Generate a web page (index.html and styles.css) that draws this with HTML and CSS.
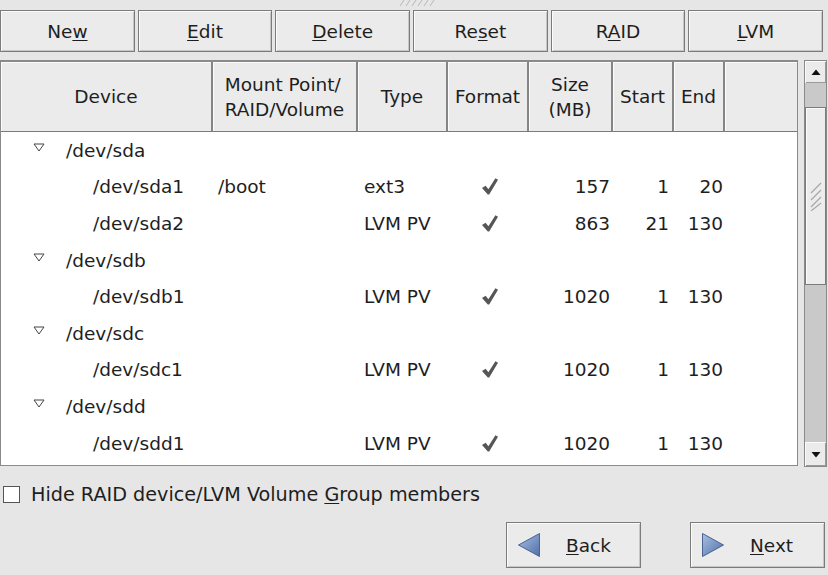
FILE: index.html
```html
<!DOCTYPE html>
<html lang="en">
<head>
    <meta charset="UTF-8">
    <title>Disk Setup</title>
    <link rel="stylesheet" href="styles.css">
</head>
<body>
    <div class="grip">
        <svg width="40" height="7" viewBox="0 0 40 7">
            <g stroke="#b8b8b8" stroke-width="1">
                <line x1="2" y1="6" x2="6" y2="0"/><line x1="8" y1="6" x2="12" y2="0"/>
                <line x1="14" y1="6" x2="18" y2="0"/><line x1="20" y1="6" x2="24" y2="0"/>
                <line x1="26" y1="6" x2="30" y2="0"/><line x1="32" y1="6" x2="36" y2="0"/>
            </g>
        </svg>
    </div>

    <div class="toolbar">
        <button class="btn">Ne<u>w</u></button>
        <button class="btn"><u>E</u>dit</button>
        <button class="btn"><u>D</u>elete</button>
        <button class="btn">Re<u>s</u>et</button>
        <button class="btn">R<u>A</u>ID</button>
        <button class="btn"><u>L</u>VM</button>
    </div>

    <div class="main">
        <div class="tree">
            <div class="row head">
                <div class="hcell">Device</div>
                <div class="hcell"><span class="left">Mount Point/<br>RAID/Volume</span></div>
                <div class="hcell">Type</div>
                <div class="hcell">Format</div>
                <div class="hcell"><span>Size<br>(MB)</span></div>
                <div class="hcell">Start</div>
                <div class="hcell">End</div>
                <div class="hcell"></div>
            </div>
            <div class="body">
                <div class="row parent">
                    <div class="dev"><svg class="exp" width="12" height="9" viewBox="0 0 12 9"><polygon points="1,1 11,1 6,8" fill="#fff" stroke="#444" stroke-width="1"/></svg>/dev/sda</div>
                </div>
                <div class="row child">
                    <div class="dev">/dev/sda1</div><div class="mnt">/boot</div><div class="type">ext3</div>
                    <div class="fmt"><svg class="check" width="16" height="17" viewBox="0 0 16 17"><polygon points="0,10 3.6,7.8 6.4,11.2 13.4,0.3 16,1.8 7.2,16.6 5.8,16.6" fill="#565656"/></svg></div>
                    <div class="num size">157</div><div class="num start">1</div><div class="num end">20</div>
                </div>
                <div class="row child">
                    <div class="dev">/dev/sda2</div><div class="mnt"></div><div class="type">LVM PV</div>
                    <div class="fmt"><svg class="check" width="16" height="17" viewBox="0 0 16 17"><polygon points="0,10 3.6,7.8 6.4,11.2 13.4,0.3 16,1.8 7.2,16.6 5.8,16.6" fill="#565656"/></svg></div>
                    <div class="num size">863</div><div class="num start">21</div><div class="num end">130</div>
                </div>
                <div class="row parent">
                    <div class="dev"><svg class="exp" width="12" height="9" viewBox="0 0 12 9"><polygon points="1,1 11,1 6,8" fill="#fff" stroke="#444" stroke-width="1"/></svg>/dev/sdb</div>
                </div>
                <div class="row child">
                    <div class="dev">/dev/sdb1</div><div class="mnt"></div><div class="type">LVM PV</div>
                    <div class="fmt"><svg class="check" width="16" height="17" viewBox="0 0 16 17"><polygon points="0,10 3.6,7.8 6.4,11.2 13.4,0.3 16,1.8 7.2,16.6 5.8,16.6" fill="#565656"/></svg></div>
                    <div class="num size">1020</div><div class="num start">1</div><div class="num end">130</div>
                </div>
                <div class="row parent">
                    <div class="dev"><svg class="exp" width="12" height="9" viewBox="0 0 12 9"><polygon points="1,1 11,1 6,8" fill="#fff" stroke="#444" stroke-width="1"/></svg>/dev/sdc</div>
                </div>
                <div class="row child">
                    <div class="dev">/dev/sdc1</div><div class="mnt"></div><div class="type">LVM PV</div>
                    <div class="fmt"><svg class="check" width="16" height="17" viewBox="0 0 16 17"><polygon points="0,10 3.6,7.8 6.4,11.2 13.4,0.3 16,1.8 7.2,16.6 5.8,16.6" fill="#565656"/></svg></div>
                    <div class="num size">1020</div><div class="num start">1</div><div class="num end">130</div>
                </div>
                <div class="row parent">
                    <div class="dev"><svg class="exp" width="12" height="9" viewBox="0 0 12 9"><polygon points="1,1 11,1 6,8" fill="#fff" stroke="#444" stroke-width="1"/></svg>/dev/sdd</div>
                </div>
                <div class="row child">
                    <div class="dev">/dev/sdd1</div><div class="mnt"></div><div class="type">LVM PV</div>
                    <div class="fmt"><svg class="check" width="16" height="17" viewBox="0 0 16 17"><polygon points="0,10 3.6,7.8 6.4,11.2 13.4,0.3 16,1.8 7.2,16.6 5.8,16.6" fill="#565656"/></svg></div>
                    <div class="num size">1020</div><div class="num start">1</div><div class="num end">130</div>
                </div>
            </div>
        </div>

        <div class="scrollbar">
            <div class="sb-btn sb-up"><svg width="10" height="7" viewBox="0 0 10 7"><polygon points="5,0.5 9.5,6 0.5,6" fill="#111"/></svg></div>
            <div class="trough trough-top"></div>
            <div class="slider">
                <svg width="12" height="30" viewBox="0 0 12 30">
                    <g stroke="#a8a8a8" stroke-width="1.2">
                        <line x1="1" y1="12" x2="11" y2="2"/><line x1="1" y1="19" x2="11" y2="9"/>
                        <line x1="1" y1="26" x2="11" y2="16"/><line x1="1" y1="30" x2="11" y2="22"/>
                    </g>
                </svg>
            </div>
            <div class="trough trough-bottom"></div>
            <div class="sb-btn sb-down"><svg width="10" height="7" viewBox="0 0 10 7"><polygon points="0.5,1 9.5,1 5,6.5" fill="#111"/></svg></div>
        </div>
    </div>

    <label class="option">
        <span class="box"></span>
        <span>Hide RAID device/LVM Volume <u>G</u>roup members</span>
    </label>

    <div class="nav">
        <button class="nav-btn">
            <svg width="24" height="26" viewBox="0 0 24 26">
                <defs>
                    <linearGradient id="gb" x1="0" y1="0" x2="1" y2="1">
                        <stop offset="0" stop-color="#a9c1e3"/>
                        <stop offset="1" stop-color="#4d6ea8"/>
                    </linearGradient>
                </defs>
                <polygon points="1.5,13 22.5,1.5 22.5,24.5" fill="url(#gb)" stroke="#4a638f" stroke-width="1"/>
            </svg>
            <span><u>B</u>ack</span>
        </button>
        <button class="nav-btn">
            <svg width="24" height="26" viewBox="0 0 24 26">
                <defs>
                    <linearGradient id="gn" x1="0" y1="0" x2="1" y2="1">
                        <stop offset="0" stop-color="#a9c1e3"/>
                        <stop offset="1" stop-color="#4d6ea8"/>
                    </linearGradient>
                </defs>
                <polygon points="1.5,1.5 22.5,13 1.5,24.5" fill="url(#gn)" stroke="#4a638f" stroke-width="1"/>
            </svg>
            <span><u>N</u>ext</span>
        </button>
    </div>
</body>
</html>
```

FILE: styles.css
```css
body {
    margin: 0;
    width: 828px;
    height: 575px;
    overflow: hidden;
    background-color: #e6e6e6;
    font-family: "DejaVu Sans", sans-serif;
    font-size: 18.5px;
    color: #1e1e1e;
}

u {
    text-decoration-thickness: 1px;
    text-underline-offset: 2px;
}

.grip {
    height: 10px;
    display: flex;
    justify-content: center;
    padding-left: 8px;
}

.grip svg {
    display: block;
}

.toolbar {
    display: grid;
    grid-template-columns: repeat(6, 1fr);
    gap: 3px;
    width: 823px;
    height: 42px;
}

.btn,
.nav-btn {
    font: inherit;
    color: inherit;
    background-color: #ebebeb;
    border: 1px solid #7b7b7b;
    box-shadow: inset 1px 1px 0 #fbfbfb, inset -1px -1px 0 #c6c6c6;
    padding: 0;
    margin: 0;
}

.main {
    display: flex;
    gap: 6px;
    margin-top: 8px;
    height: 407px;
}

.tree {
    box-sizing: border-box;
    width: 798px;
    height: 406px;
    border: 1px solid #8a8a8a;
    background-color: #fff;
}

.row {
    display: grid;
    grid-template-columns: 212px 145px 90px 81px 84px 61px 51px 1fr;
}

.head {
    height: 71px;
    background-color: #ebebeb;
    border-top: 1px solid #8a8a8a;
    border-bottom: 1px solid #7b7b7b;
    box-sizing: border-box;
}

.hcell {
    display: flex;
    align-items: center;
    justify-content: center;
    text-align: center;
    line-height: 25px;
    border-right: 2px solid #858585;
    box-shadow: inset 1px 1px 0 #fbfbfb;
}

.hcell:last-child {
    border-right: none;
}

.hcell .left {
    text-align: left;
}

.body .row {
    height: 36.6px;
    align-items: center;
}

.parent .dev {
    display: flex;
    align-items: center;
    padding-left: 32px;
}

.exp {
    margin-right: 21px;
    position: relative;
    top: -3px;
}

.child .dev {
    padding-left: 92px;
}

.mnt {
    padding-left: 5px;
}

.type {
    padding-left: 6px;
}

.fmt {
    display: flex;
    justify-content: center;
    padding-left: 3px;
}

.num {
    text-align: right;
}

.size {
    padding-right: 3px;
}

.start {
    padding-right: 5px;
}

.end {
    padding-right: 2px;
}

.scrollbar {
    box-sizing: border-box;
    width: 23px;
    display: flex;
    flex-direction: column;
    border: 1px solid #8a8a8a;
    background-color: #c9c9c9;
}

.sb-btn {
    display: flex;
    align-items: center;
    justify-content: center;
    background-color: #ebebeb;
    box-shadow: inset 1px 1px 0 #fbfbfb, inset -1px -1px 0 #9a9a9a;
}

.sb-up {
    height: 22px;
}

.sb-down {
    height: 24px;
}

.trough-top {
    height: 24px;
}

.slider {
    height: 178px;
    box-sizing: border-box;
    border: 1px solid #7b7b7b;
    background-color: #ececec;
    box-shadow: inset 1px 1px 0 #fbfbfb;
    display: flex;
    align-items: center;
    justify-content: center;
}

.trough-bottom {
    flex: 1;
}

.option {
    display: flex;
    align-items: center;
    gap: 11px;
    margin-top: 18px;
    padding-left: 3px;
    height: 18px;
    font-size: 19.2px;
}

.box {
    width: 17px;
    height: 17px;
    box-sizing: border-box;
    border: 1px solid #555;
    background-color: #fff;
}

.nav {
    display: flex;
    justify-content: flex-end;
    gap: 49px;
    margin-top: 19px;
    padding-right: 3px;
}

.nav-btn {
    display: flex;
    align-items: center;
    width: 135px;
    height: 46px;
    padding-left: 10px;
    gap: 25px;
}
```
